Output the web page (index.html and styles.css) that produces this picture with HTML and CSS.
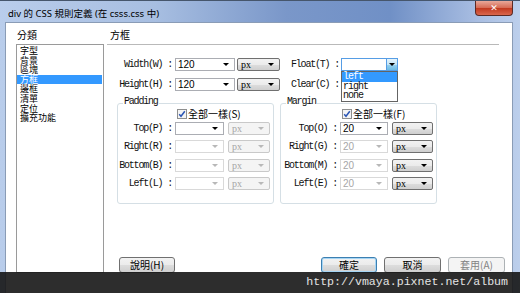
FILE: index.html
```html
<!DOCTYPE html>
<html lang="zh-Hant">
<head>
  <meta charset="UTF-8">
  <title>div 的 CSS 規則定義</title>
  <link rel="stylesheet" href="styles.css">
</head>
<body>
  <div class="window">
    <div class="titlebar">
      <span class="title">div 的 CSS 規則定義 (在 csss.css 中)</span>
      <span class="close">✕</span>
    </div>

    <div class="client">
      <div class="category">
        <div class="head">分類</div>
        <ul class="listbox">
          <li>字型</li>
          <li>背景</li>
          <li>區塊</li>
          <li class="selected">方框</li>
          <li>邊框</li>
          <li>清單</li>
          <li>定位</li>
          <li>擴充功能</li>
        </ul>
      </div>

      <div class="right">
        <div class="panel-head">方框</div>
        <div class="panel">
          <div class="row">
            <span class="lbl main-lbl">Width(W) :</span>
            <div class="combo size"><span class="val">120</span><i class="arrow"></i></div>
            <div class="unit"><span>px</span><i class="arrow"></i></div>
            <span class="lbl side-lbl">Float(T) :</span>
            <div class="combo side focus">
              <span class="drop-btn"><i class="arrow"></i></span>
              <ul class="menu">
                <li class="hl">left</li>
                <li>right</li>
                <li>none</li>
              </ul>
            </div>
          </div>
          <div class="row second">
            <span class="lbl main-lbl">Height(H) :</span>
            <div class="combo size"><span class="val">120</span><i class="arrow"></i></div>
            <div class="unit"><span>px</span><i class="arrow"></i></div>
            <span class="lbl side-lbl">Clear(C) :</span>
            <div class="combo side"><i class="arrow"></i></div>
          </div>

          <div class="groups">
            <fieldset class="group pad">
              <legend>Padding</legend>
              <div class="same">
                <svg class="check" width="10" height="10" viewBox="0 0 10 10">
                  <rect x="0.5" y="0.5" width="9" height="9" fill="#f4f4f4" stroke="#8e8f8f"/>
                  <path d="M2.2 5.2 L4 7.3 L7.8 2.2" fill="none" stroke="#2a55b4" stroke-width="1.5"/>
                </svg>
                <span>全部一樣(S)</span>
              </div>
              <div class="frow">
                <span class="lbl">Top(P) :</span>
                <div class="combo"><i class="arrow"></i></div>
                <div class="unit off"><span>px</span><i class="arrow"></i></div>
              </div>
              <div class="frow">
                <span class="lbl">Right(R) :</span>
                <div class="combo off"><i class="arrow"></i></div>
                <div class="unit off"><span>px</span><i class="arrow"></i></div>
              </div>
              <div class="frow">
                <span class="lbl">Bottom(B) :</span>
                <div class="combo off"><i class="arrow"></i></div>
                <div class="unit off"><span>px</span><i class="arrow"></i></div>
              </div>
              <div class="frow">
                <span class="lbl">Left(L) :</span>
                <div class="combo off"><i class="arrow"></i></div>
                <div class="unit off"><span>px</span><i class="arrow"></i></div>
              </div>
            </fieldset>

            <fieldset class="group mar">
              <legend>Margin</legend>
              <div class="same">
                <svg class="check" width="10" height="10" viewBox="0 0 10 10">
                  <rect x="0.5" y="0.5" width="9" height="9" fill="#f4f4f4" stroke="#8e8f8f"/>
                  <path d="M2.2 5.2 L4 7.3 L7.8 2.2" fill="none" stroke="#2a55b4" stroke-width="1.5"/>
                </svg>
                <span>全部一樣(F)</span>
              </div>
              <div class="frow">
                <span class="lbl">Top(O) :</span>
                <div class="combo"><span class="val">20</span><i class="arrow"></i></div>
                <div class="unit"><span>px</span><i class="arrow"></i></div>
              </div>
              <div class="frow">
                <span class="lbl">Right(G) :</span>
                <div class="combo off"><span class="val">20</span><i class="arrow"></i></div>
                <div class="unit"><span>px</span><i class="arrow"></i></div>
              </div>
              <div class="frow">
                <span class="lbl">Bottom(M) :</span>
                <div class="combo off"><span class="val">20</span><i class="arrow"></i></div>
                <div class="unit"><span>px</span><i class="arrow"></i></div>
              </div>
              <div class="frow">
                <span class="lbl">Left(E) :</span>
                <div class="combo off"><span class="val">20</span><i class="arrow"></i></div>
                <div class="unit"><span>px</span><i class="arrow"></i></div>
              </div>
            </fieldset>
          </div>
        </div>

        <div class="footer">
          <button class="btn help">說明(H)</button>
          <div class="actions">
            <button class="btn default">確定</button>
            <button class="btn">取消</button>
            <button class="btn disabled">套用(A)</button>
          </div>
        </div>
      </div>
    </div>

    <div class="watermark">http://vmaya.pixnet.net/album</div>
  </div>
</body>
</html>
```

FILE: styles.css
```css
body { margin: 0; overflow: hidden; background: #fff; }

.window {
  position: relative;
  width: 520px;
  height: 293px;
  overflow: hidden;
  box-sizing: border-box;
  border-top: 1px solid #46566c;
  background: linear-gradient(to right, #b9cdeb 0%, #a7bee1 30%, #7a97c9 55%, #7090c6 75%, #a9bee2 92%, #bccfec 100%);
  font-family: "Noto Sans", "Noto Sans CJK TC", sans-serif;
}

.titlebar { height: 21px; display: flex; align-items: flex-start; }
.title { margin: 7px 0 0 8px; font-size: 9.5px; line-height: 12px; color: #000; white-space: nowrap; }
.close {
  margin-left: auto;
  margin-right: 7px;
  width: 38px;
  height: 15px;
  box-sizing: border-box;
  border: 1px solid #5c2a24;
  border-top: none;
  border-radius: 0 0 4px 4px;
  background: linear-gradient(#e9a899, #d66b55 48%, #c2391f 52%, #d9674d);
  color: #fff;
  font: bold 9px/14px "DejaVu Sans", sans-serif;
  text-align: center;
}

.client {
  margin: 0 7px 0 5px;
  height: 272px;
  box-sizing: border-box;
  border: 1px solid #8a9cb6;
  background: #fff;
  display: flex;
  padding-left: 10px;
}

.category { width: 88px; }
.head, .panel-head {
  height: 21px;
  box-sizing: border-box;
  display: flex;
  align-items: flex-end;
  padding-bottom: 4px;
  font-size: 10px;
  line-height: 10px;
  font-family: "Noto Sans CJK TC", sans-serif;
}
.head { padding-left: 1px; }

.listbox {
  margin: 0;
  padding: 1px 0 0;
  list-style: none;
  height: 229px;
  box-sizing: border-box;
  border: 1px solid #9a9a9a;
}
.listbox li {
  font: 9px/9.6px "Noto Sans CJK TC", sans-serif;
  height: 9.6px;
  padding-left: 3px;
  margin-right: 1px;
  white-space: nowrap;
}
.listbox li.selected { background: #3399ff; color: #fff; }

.right { width: 398px; margin-left: 3px; display: flex; flex-direction: column; height: 250px; }
.panel-head { height: 22px; border-bottom: 1px solid #b9b9b9; margin-right: 6px; padding-left: 3px; }
.panel { padding-top: 13px; }

.lbl {
  font: 10px/13px "Liberation Mono", monospace;
  letter-spacing: -1.2px;
  color: #111;
  white-space: nowrap;
  box-sizing: border-box;
}

.row { display: flex; align-items: center; height: 13px; }
.row.second { margin-top: 7px; }
.main-lbl { width: 68px; padding-right: 3px; text-align: right; }
.side-lbl { width: 50px; margin-left: 11px; }

.combo, .unit {
  position: relative;
  display: flex;
  align-items: center;
  height: 13px;
  box-sizing: border-box;
  font-size: 10px;
  line-height: 11px;
}
.combo { border: 1px solid #abadb3; background: #fff; }
.combo.size { width: 60px; }
.combo.side { width: 57px; }
.combo.off { border-color: #d9d9d9; }
.combo.off .val { color: #a6a6a6; }
.combo.focus { border-color: #569de5; z-index: 2; }

.val { font: 10px/11px "Liberation Sans", sans-serif; padding-left: 2px; }

.arrow {
  position: absolute;
  right: 5px;
  top: 4px;
  border-left: 3px solid transparent;
  border-right: 3px solid transparent;
  border-top: 3px solid #000;
}
.combo.off .arrow { border-top-color: #b8b8b8; }

.drop-btn {
  position: absolute;
  right: 0;
  top: 0;
  width: 11px;
  height: 11px;
  box-sizing: border-box;
  border-left: 1px solid #569de5;
  background: linear-gradient(#e5f4fc, #c4e5f6 50%, #98d1ef 51%, #6cbbe4);
}
.drop-btn .arrow { right: 2px; }

.menu {
  position: absolute;
  left: -1px;
  top: 12px;
  width: 57px;
  margin: 0;
  padding: 0;
  list-style: none;
  box-sizing: border-box;
  border: 1px solid #646464;
  background: #fff;
}
.menu li { font: 10px/9.6px "Liberation Mono", monospace; letter-spacing: -1px; padding-left: 1px; color: #111; }
.menu li.hl { background: #3399ff; color: #fff; }

.unit {
  width: 43px;
  margin-left: 2px;
  border: 1px solid #707070;
  border-radius: 2px;
  background: linear-gradient(#f2f2f2, #ebebeb 50%, #dddddd 51%, #cfcfcf);
}
.unit span { font: 10px/11px "Liberation Serif", serif; padding-left: 3px; }
.unit.off { border-color: #c9c9c9; background: #f4f4f4; }
.unit.off span { color: #a6a6a6; }
.unit.off .arrow { border-top-color: #b8b8b8; }

.groups { display: flex; gap: 6px; padding-left: 10px; margin-top: 6px; }
.group {
  width: 157px;
  margin: 0;
  padding: 0 0 13px;
  box-sizing: border-box;
  border: 1px solid #d5dfe5;
  border-radius: 3px;
}
.group legend {
  margin-left: 5px;
  padding: 0 1px 2px;
  font: 10px/10px "Liberation Mono", monospace;
  letter-spacing: -1.2px;
  color: #111;
}

.same { display: flex; align-items: center; height: 9px; font: 10px/10px "Noto Sans CJK TC", sans-serif; }
.same span { margin-left: 1px; }
.check { display: block; }
.pad .same { padding-left: 59px; }
.mar .same { padding-left: 61px; }

.frow { display: flex; align-items: center; height: 13px; margin-top: 5.33px; }
.same + .frow { margin-top: 4px; }
.frow .lbl { padding-right: 3px; text-align: right; }
.pad .frow .lbl { width: 57px; }
.pad .frow .combo { width: 49px; }
.pad .frow .unit { width: 42px; margin-left: 4px; }
.mar .frow .lbl { width: 59px; }
.mar .frow .combo { width: 48px; }
.mar .frow .unit { width: 41px; margin-left: 4px; }

.footer { margin-top: auto; display: flex; padding-left: 12px; }
.actions { margin-left: auto; display: flex; gap: 7px; }
.btn {
  width: 57px;
  height: 16px;
  padding: 0;
  box-sizing: border-box;
  border: 1px solid #707070;
  border-radius: 3px;
  background: linear-gradient(#f2f2f2, #ebebeb 50%, #dddddd 51%, #cfcfcf);
  font: 10px/12px "Noto Sans CJK TC", sans-serif;
  color: #000;
}
.btn.help { width: 56px; }
.btn.default { width: 56px; border-color: #3c7fb1; box-shadow: inset 0 0 0 1px #a6d5f4; }
.btn.disabled { border-color: #adb2b5; background: #f4f4f4; color: #838383; }

.watermark {
  position: absolute;
  left: 0;
  right: 0;
  bottom: 0;
  height: 21px;
  padding-right: 12px;
  background: rgba(22, 22, 22, 0.9);
  color: #e4e4e4;
  font: 11.6px/19px "Liberation Mono", monospace;
  text-align: right;
}
```
